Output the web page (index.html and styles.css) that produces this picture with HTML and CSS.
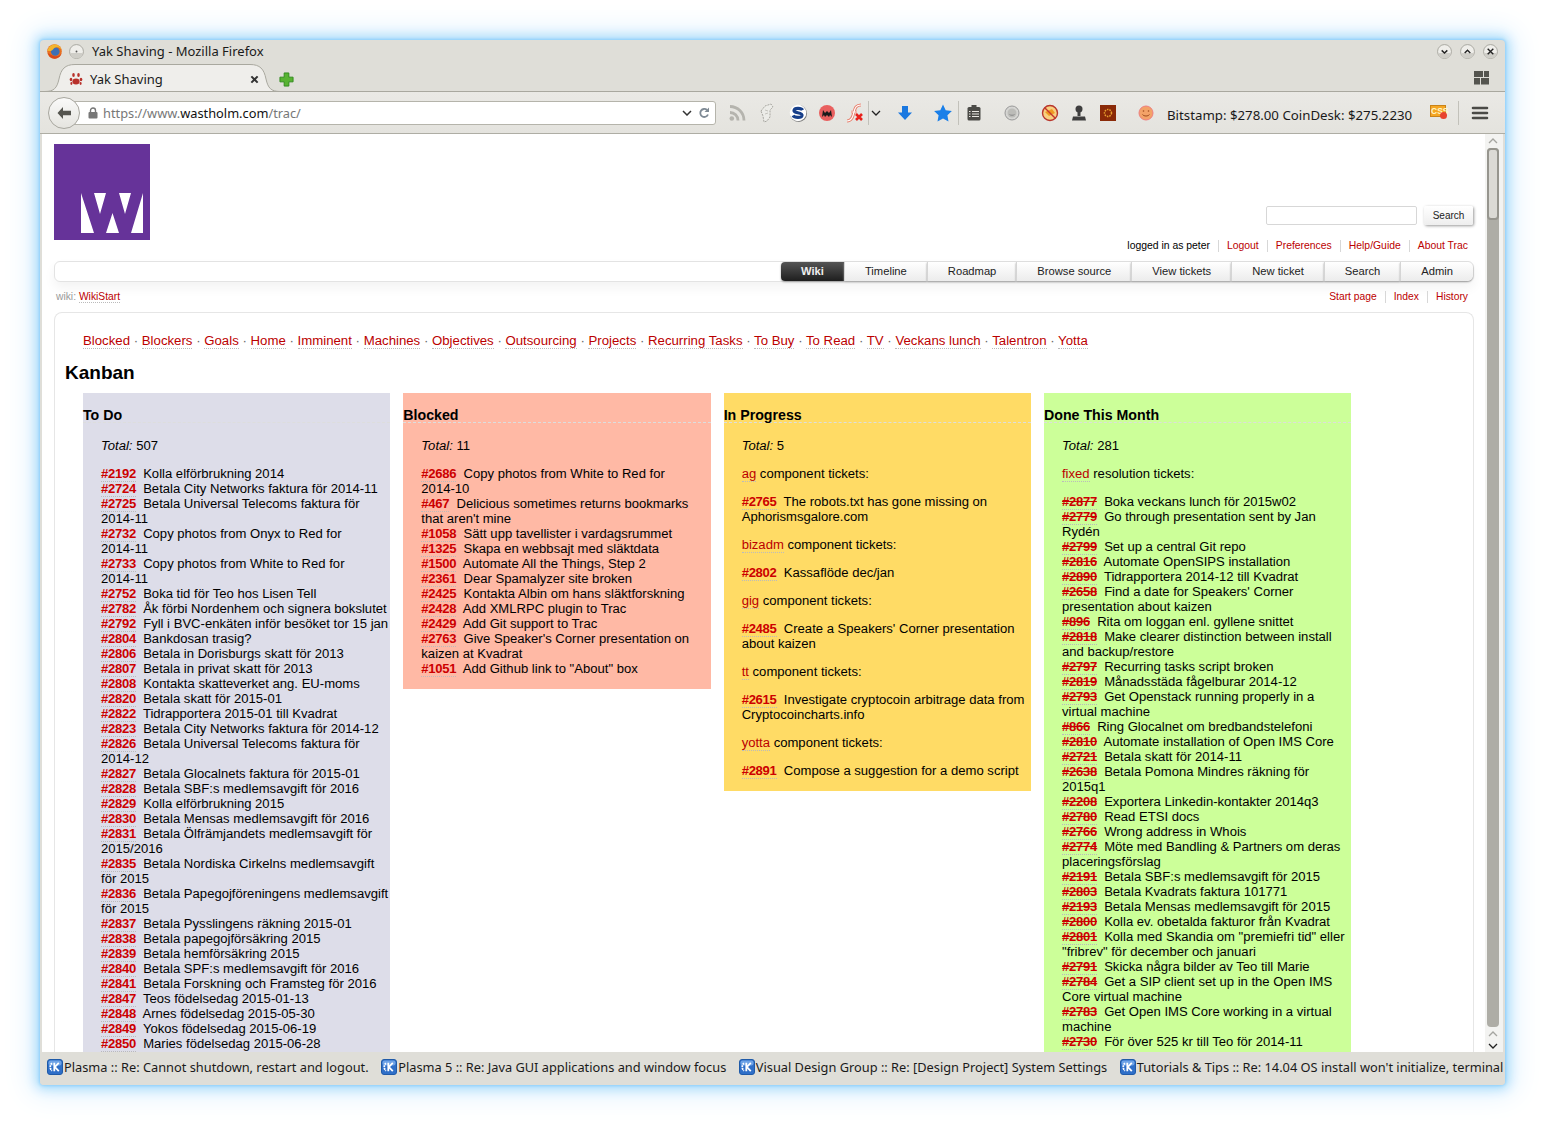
FILE: index.html
```html
<!DOCTYPE html>
<html lang="sv">
<head>
<meta charset="utf-8">
<title>Yak Shaving - Mozilla Firefox</title>
<link rel="stylesheet" href="styles.css">
</head>
<body>
<svg class="defs" aria-hidden="true">
  <symbol id="kde" viewBox="0 0 16 16">
    <rect x=".5" y=".5" width="15" height="15" rx="2.5" fill="#2f6fc8" stroke="#1f5aa8"/>
    <rect x="1.5" y="1.5" width="13" height="5" rx="2" fill="#6ea3e6"/>
    <path d="M5 4.200a5 5 0 0 0 0 7.600" fill="none" stroke="#fff" stroke-width="1.800" stroke-dasharray="1.800 .7"/>
    <path d="M7.300 3.800v8.400M11.800 3.800L7.900 8l3.900 4.200" fill="none" stroke="#fff" stroke-width="1.800"/>
  </symbol>
  <symbol id="winbtn" viewBox="0 0 16 16">
    <circle cx="8" cy="8" r="7.400" fill="#efeeea" stroke="#a5a49d"/>
    <path d="M1.300 9.500a6.800 6.800 0 0 0 13.400 0z" fill="#cfcec8"/>
  </symbol>
</svg>
<div class="window">
  <div class="titlebar">
    <svg class="ff" viewBox="0 0 16 16"><circle cx="8" cy="8" r="7.800" fill="#e8701f"/><circle cx="8.800" cy="8" r="4.600" fill="#3e6fb5"/><path d="M.6 7C1.500 3 4.500.4 8.500.4c3.200 0 5.700 2 6.800 5.200-2-2.200-4.300-2.600-6.300-2-2 .7-2 2-3.500 3C4 7.600 2.200 8 .6 7z" fill="#f4b52c"/><path d="M.8 9.500c1.200 3.800 4.300 6.200 7.700 6.100 3.300-.1 6.300-2.500 7-5.900-1.600 2.800-4.300 4-7 3.300-2.700-.6-5-1.800-7.700-3.500z" fill="#d8481c"/></svg>
    <svg class="pin" viewBox="0 0 16 16"><use href="#winbtn"/><circle cx="8" cy="8" r="1" fill="#555"/></svg>
    <span class="wintitle">Yak Shaving - Mozilla Firefox</span>
    <div class="winbtns">
      <svg class="wb" viewBox="0 0 16 16"><use href="#winbtn"/><path d="M5 6.800l3 2.800 3-2.800" fill="none" stroke="#222" stroke-width="1.500"/></svg>
      <svg class="wb" viewBox="0 0 16 16"><use href="#winbtn"/><path d="M5 9.500l3-2.800 3 2.800" fill="none" stroke="#222" stroke-width="1.500"/></svg>
      <svg class="wb" viewBox="0 0 16 16"><use href="#winbtn"/><path d="M5 5l6 6M11 5l-6 6" fill="none" stroke="#222" stroke-width="1.500"/></svg>
    </div>
  </div>
  <div class="tabstrip">
    <div class="tab">
      <svg class="tabshape" viewBox="0 0 235 28"><path d="M0 27.500C9 27.500 12 24 14 15 16 5 20 .5 30 .5H205C215 .5 219 5 221 15 223 24 226 27.500 235 27.500Z" fill="#efeeeb" stroke="#a9a89f"/></svg>
      <svg class="paw" viewBox="0 0 14 14" fill="#b8302a"><ellipse cx="7" cy="9.500" rx="3.600" ry="3"/><ellipse cx="2" cy="7.500" rx="1.300" ry="1.800"/><ellipse cx="12" cy="7.500" rx="1.300" ry="1.800"/><ellipse cx="4.500" cy="3" rx="1.300" ry="2"/><ellipse cx="9.500" cy="3" rx="1.300" ry="2"/><ellipse cx="2.400" cy="11.500" rx="1" ry="1.400"/><ellipse cx="11.600" cy="11.500" rx="1" ry="1.400"/></svg>
      <span class="tabtitle">Yak Shaving</span>
      <svg class="tabclose" viewBox="0 0 10 10"><path d="M1.500 1.500l7 7M8.500 1.500l-7 7" stroke="#333" stroke-width="2.200" fill="none"/></svg>
    </div>
    <svg class="newtab" viewBox="0 0 16 16"><path d="M5.500 1h5v4.500H15v5h-4.500V15h-5v-4.500H1v-5h4.500z" fill="#58b332" stroke="#2f8a1b"/></svg>
    <svg class="tabgroups" viewBox="0 0 16 14" fill="#55554f"><rect x="0" y="0" width="9" height="6"/><rect x="10" y="0" width="5" height="6"/><rect x="0" y="7" width="6" height="6.500"/><rect x="7" y="7" width="8" height="6.500"/></svg>
  </div>
  <div class="navbar">
    <div class="urlbar">
      <svg class="lock" viewBox="0 0 10 12"><path d="M2.500 5V3.500a2.500 2.500 0 0 1 5 0V5" fill="none" stroke="#777" stroke-width="1.400"/><rect x=".5" y="5" width="9" height="6.500" rx="1" fill="#777"/></svg>
      <span class="url">https://www.<b>wastholm.com</b>/trac/</span>
      <svg class="urlchev" viewBox="0 0 10 6"><path d="M1 1l4 4 4-4" fill="none" stroke="#333" stroke-width="1.500"/></svg>
      <svg class="reload" viewBox="0 0 12 12"><path d="M10 7.500A4 4 0 1 1 9 3" fill="none" stroke="#7f8a95" stroke-width="1.800"/><path d="M11 .5v4.500H6.500z" fill="#7f8a95"/></svg>
    </div>
    <div class="backbtn"><svg viewBox="0 0 16 14"><path d="M7 1L1.500 7 7 13V9.200h8V4.800H7z" fill="#55554f"/></svg></div>
    <svg class="ic m11" viewBox="0 0 20 20"><g fill="none" stroke="#b5b4ae" stroke-width="2.800"><path d="M3 9.500a8 8 0 0 1 8 8"/><path d="M3 3.500a14 14 0 0 1 14 14"/></g><circle cx="4.800" cy="15.500" r="2.300" fill="#b5b4ae"/></svg>
    <svg class="ic m10" viewBox="0 0 20 20"><path d="M4 8L8 3l6-2 2 3-3 3v7l-3 4-3 1-1-6z" fill="#ecece8" stroke="#a8a7a1" stroke-dasharray="2 1"/><path d="M8 7l3 1M8 11l3-1" stroke="#c4c3bd"/></svg>
    <svg class="ic m11" viewBox="0 0 20 20"><circle cx="10.500" cy="10.500" r="8.500" fill="#777"/><circle cx="10" cy="10" r="8.300" fill="#fff"/><path d="M14.500 7.200c-1-2.200-8-2.700-8.500.3C5.500 10.500 14.500 9 14 12.500 13.500 15.200 6.500 15 5 12.500" fill="none" stroke="#173f8a" stroke-width="3.200"/></svg>
    <svg class="ic m9" viewBox="0 0 20 20"><circle cx="10" cy="10" r="8" fill="#e9605f"/><path d="M5 14l1-7 2 3 2-2 2 2 2-3 1 7-2-2-1 2-2-2-2 2-1-2z" fill="#1b1b1b"/></svg>
    <svg class="ic m8" viewBox="0 0 20 20"><g fill="none" stroke="#e8826f"><path d="M2 18c5 0 6-5 7-9s2-7 7-7" stroke-width="3"/><path d="M6 9h6" stroke-width="2.400"/></g><g fill="none" stroke="#fff"><path d="M2 18c5 0 6-5 7-9s2-7 7-7" stroke-width="1.200"/><path d="M6 9h6" stroke-width=".8"/></g><path d="M11 11l6 6M17 11l-6 6" stroke="#e8201a" stroke-width="2.600"/></svg>
    <span class="sep m3"></span>
    <svg class="chev m2" viewBox="0 0 10 6"><path d="M1 1l4 4 4-4" fill="none" stroke="#222" stroke-width="1.300"/></svg>
    <svg class="ic m14" viewBox="0 0 20 20"><path d="M7 3h6v6.500h4L10 17 3 9.500h4z" fill="#1a78e0"/></svg>
    <svg class="ic m18" viewBox="0 0 20 20"><path d="M10 1.500l2.700 5.700 6.200.8-4.500 4.300 1.100 6.200L10 15.500l-5.500 3 1.100-6.200L1.100 8l6.200-.8z" fill="#1a7fe8"/></svg>
    <span class="sep m5"></span>
    <svg class="ic m5" viewBox="0 0 20 20"><rect x="3.500" y="4" width="13" height="13.500" rx="1.500" fill="#4b4b47"/><rect x="7.500" y="2" width="5" height="4" fill="#4b4b47"/><path d="M8 8.500h7M8 11h7M8 13.500h7M5 8.500h1.500M5 11h1.500M5 13.500h1.500" stroke="#e8e7e2"/></svg>
    <svg class="ic m18" viewBox="0 0 20 20"><circle cx="10" cy="10" r="7" fill="#d5d5d2" stroke="#999"/><circle cx="10" cy="10" r="4.500" fill="#bcbcb8"/><path d="M7.500 11.500c1 1 4 1 5 0" fill="none" stroke="#888"/></svg>
    <svg class="ic m18" viewBox="0 0 20 20"><circle cx="10" cy="10" r="7.500" fill="#f8d080" stroke="#b8352c" stroke-width="1.400"/><path d="M5 9l7-3 3 4-6 3z" fill="#ee9a22"/><path d="M4.700 4.700l10.600 10.600" stroke="#c4352c" stroke-width="1.400"/></svg>
    <svg class="ic m9" viewBox="0 0 20 20" fill="#3e3e3e"><circle cx="10" cy="6" r="3.500"/><rect x="8.500" y="8" width="3" height="5"/><path d="M4 13.500h12l1 4H3z"/></svg>
    <svg class="ic m9" viewBox="0 0 20 20"><rect x="2" y="2" width="16" height="16" fill="#8a2a08"/><circle cx="10" cy="10" r="3.500" fill="none" stroke="#e8a030" stroke-width="1.500" stroke-dasharray="1.500 1"/></svg>
    <svg class="ic m18" viewBox="0 0 20 20"><circle cx="10" cy="10" r="7" fill="#f3a268" stroke="#ee7f7f"/><circle cx="7.500" cy="8" r=".8" fill="#a04c20"/><circle cx="12.500" cy="8" r=".8" fill="#a04c20"/><path d="M6.500 11.500c1.500 2 5.500 2 7 0" fill="none" stroke="#a04c20"/></svg>
    <span class="prices">Bitstamp: $278.00 CoinDesk: $275.2230</span>
    <div class="cssicon m18"><span>CSS</span><i></i></div>
    <span class="sep m12"></span>
    <svg class="ic m11" viewBox="0 0 20 20"><path d="M3 5h14M3 10h14M3 15h14" stroke="#4a4a46" stroke-width="2.600" stroke-linecap="round"/></svg>
  </div>
  <div class="viewport">
    <div class="page">
      <header class="sitehead">
        <svg class="logo" viewBox="0 0 96 96"><rect width="96" height="96" fill="#663399"/><path d="M27 49l13 40H27zM40 49h12l-6 21zM52 89h13l-6.500-20zM65 49h12l-6 21zM89 49v40H77z" fill="#fff"/></svg>
        <form class="search"><input class="searchbox" type="text"><button class="searchbtn" type="button">Search</button></form>
      </header>
      <nav class="metanav">
        <span>logged in as peter</span><a>Logout</a><a>Preferences</a><a>Help/Guide</a><a>About Trac</a>
      </nav>
      <nav class="mainnav">
        <a class="active">Wiki</a><a>Timeline</a><a>Roadmap</a><a>Browse source</a><a>View tickets</a><a>New ticket</a><a>Search</a><a>Admin</a>
      </nav>
      <div class="ctxt">
        <div class="crumb">wiki: <a>WikiStart</a></div>
        <div class="ctxtnav"><a>Start page</a><a>Index</a><a>History</a></div>
      </div>
      <main class="content">
        <p class="links"><a>Blocked</a> · <a>Blockers</a> · <a>Goals</a> · <a>Home</a> · <a>Imminent</a> · <a>Machines</a> · <a>Objectives</a> · <a>Outsourcing</a> · <a>Projects</a> · <a>Recurring Tasks</a> · <a>To Buy</a> · <a>To Read</a> · <a>TV</a> · <a>Veckans lunch</a> · <a>Talentron</a> · <a>Yotta</a></p>
        <h1>Kanban</h1>
        <div class="board">
          <section class="col todo">
            <h2>To Do</h2>
            <p><em>Total:</em> 507</p>
            <p>
              <a class="t">#2192</a>&nbsp; Kolla elförbrukning 2014<br>
              <a class="t">#2724</a>&nbsp; Betala City Networks faktura för 2014-11<br>
              <a class="t">#2725</a>&nbsp; Betala Universal Telecoms faktura för <span class="nb">2014-11</span><br>
              <a class="t">#2732</a>&nbsp; Copy photos from Onyx to Red for <span class="nb">2014-11</span><br>
              <a class="t">#2733</a>&nbsp; Copy photos from White to Red for <span class="nb">2014-11</span><br>
              <a class="t">#2752</a>&nbsp; Boka tid för Teo hos Lisen Tell<br>
              <a class="t">#2782</a>&nbsp; Åk förbi Nordenhem och signera bokslutet<br>
              <a class="t">#2792</a>&nbsp; Fyll i BVC-enkäten inför besöket tor 15 jan<br>
              <a class="t">#2804</a>&nbsp; Bankdosan trasig?<br>
              <a class="t">#2806</a>&nbsp; Betala in Dorisburgs skatt för 2013<br>
              <a class="t">#2807</a>&nbsp; Betala in privat skatt för 2013<br>
              <a class="t">#2808</a>&nbsp; Kontakta skatteverket ang. EU-moms<br>
              <a class="t">#2820</a>&nbsp; Betala skatt för 2015-01<br>
              <a class="t">#2822</a>&nbsp; Tidrapportera 2015-01 till Kvadrat<br>
              <a class="t">#2823</a>&nbsp; Betala City Networks faktura för 2014-12<br>
              <a class="t">#2826</a>&nbsp; Betala Universal Telecoms faktura för <span class="nb">2014-12</span><br>
              <a class="t">#2827</a>&nbsp; Betala Glocalnets faktura för 2015-01<br>
              <a class="t">#2828</a>&nbsp; Betala SBF:s medlemsavgift för 2016<br>
              <a class="t">#2829</a>&nbsp; Kolla elförbrukning 2015<br>
              <a class="t">#2830</a>&nbsp; Betala Mensas medlemsavgift för 2016<br>
              <a class="t">#2831</a>&nbsp; Betala Ölfrämjandets medlemsavgift för 2015/2016<br>
              <a class="t">#2835</a>&nbsp; Betala Nordiska Cirkelns medlemsavgift för 2015<br>
              <a class="t">#2836</a>&nbsp; Betala Papegojföreningens medlemsavgift för 2015<br>
              <a class="t">#2837</a>&nbsp; Betala Pysslingens räkning 2015-01<br>
              <a class="t">#2838</a>&nbsp; Betala papegojförsäkring 2015<br>
              <a class="t">#2839</a>&nbsp; Betala hemförsäkring 2015<br>
              <a class="t">#2840</a>&nbsp; Betala SPF:s medlemsavgift för 2016<br>
              <a class="t">#2841</a>&nbsp; Betala Forskning och Framsteg för 2016<br>
              <a class="t">#2847</a>&nbsp; Teos födelsedag 2015-01-13<br>
              <a class="t">#2848</a>&nbsp; Arnes födelsedag 2015-05-30<br>
              <a class="t">#2849</a>&nbsp; Yokos födelsedag 2015-06-19<br>
              <a class="t">#2850</a>&nbsp; Maries födelsedag 2015-06-28
            </p>
          </section>
          <section class="col blocked">
            <h2>Blocked</h2>
            <p><em>Total:</em> 11</p>
            <p>
              <a class="t">#2686</a>&nbsp; Copy photos from White to Red for <span class="nb">2014-10</span><br>
              <a class="t">#467</a>&nbsp; Delicious sometimes returns bookmarks that aren't mine<br>
              <a class="t">#1058</a>&nbsp; Sätt upp tavellister i vardagsrummet<br>
              <a class="t">#1325</a>&nbsp; Skapa en webbsajt med släktdata<br>
              <a class="t">#1500</a>&nbsp; Automate All the Things, Step 2<br>
              <a class="t">#2361</a>&nbsp; Dear Spamalyzer site broken<br>
              <a class="t">#2425</a>&nbsp; Kontakta Albin om hans släktforskning<br>
              <a class="t">#2428</a>&nbsp; Add XMLRPC plugin to Trac<br>
              <a class="t">#2429</a>&nbsp; Add Git support to Trac<br>
              <a class="t">#2763</a>&nbsp; Give Speaker's Corner presentation on kaizen at Kvadrat<br>
              <a class="t">#1051</a>&nbsp; Add Github link to "About" box
            </p>
          </section>
          <section class="col progress">
            <h2>In Progress</h2>
            <p><em>Total:</em> 5</p>
            <p><a>ag</a> component tickets:</p>
            <p><a class="t">#2765</a>&nbsp; The robots.txt has gone missing on Aphorismsgalore.com</p>
            <p><a>bizadm</a> component tickets:</p>
            <p><a class="t">#2802</a>&nbsp; Kassaflöde dec/jan</p>
            <p><a>gig</a> component tickets:</p>
            <p><a class="t">#2485</a>&nbsp; Create a Speakers' Corner presentation about kaizen</p>
            <p><a>tt</a> component tickets:</p>
            <p><a class="t">#2615</a>&nbsp; Investigate cryptocoin arbitrage data from Cryptocoincharts.info</p>
            <p><a>yotta</a> component tickets:</p>
            <p><a class="t">#2891</a>&nbsp; Compose a suggestion for a demo script</p>
          </section>
          <section class="col done">
            <h2>Done This Month</h2>
            <p><em>Total:</em> 281</p>
            <p><a>fixed</a> resolution tickets:</p>
            <p>
              <a class="t c">#2877</a>&nbsp; Boka veckans lunch för 2015w02<br>
              <a class="t c">#2779</a>&nbsp; Go through presentation sent by Jan Rydén<br>
              <a class="t c">#2799</a>&nbsp; Set up a central Git repo<br>
              <a class="t c">#2816</a>&nbsp; Automate OpenSIPS installation<br>
              <a class="t c">#2890</a>&nbsp; Tidrapportera 2014-12 till Kvadrat<br>
              <a class="t c">#2658</a>&nbsp; Find a date for Speakers' Corner presentation about kaizen<br>
              <a class="t c">#896</a>&nbsp; Rita om loggan enl. gyllene snittet<br>
              <a class="t c">#2818</a>&nbsp; Make clearer distinction between install and backup/restore<br>
              <a class="t c">#2797</a>&nbsp; Recurring tasks script broken<br>
              <a class="t c">#2819</a>&nbsp; Månadsstäda fågelburar 2014-12<br>
              <a class="t c">#2793</a>&nbsp; Get Openstack running properly in a virtual machine<br>
              <a class="t c">#866</a>&nbsp; Ring Glocalnet om bredbandstelefoni<br>
              <a class="t c">#2810</a>&nbsp; Automate installation of Open IMS Core<br>
              <a class="t c">#2721</a>&nbsp; Betala skatt för 2014-11<br>
              <a class="t c">#2638</a>&nbsp; Betala Pomona Mindres räkning för 2015q1<br>
              <a class="t c">#2208</a>&nbsp; Exportera Linkedin-kontakter 2014q3<br>
              <a class="t c">#2780</a>&nbsp; Read ETSI docs<br>
              <a class="t c">#2766</a>&nbsp; Wrong address in Whois<br>
              <a class="t c">#2774</a>&nbsp; Möte med Bandling &amp; Partners om deras placeringsförslag<br>
              <a class="t c">#2191</a>&nbsp; Betala SBF:s medlemsavgift för 2015<br>
              <a class="t c">#2803</a>&nbsp; Betala Kvadrats faktura 101771<br>
              <a class="t c">#2193</a>&nbsp; Betala Mensas medlemsavgift för 2015<br>
              <a class="t c">#2800</a>&nbsp; Kolla ev. obetalda fakturor från Kvadrat<br>
              <a class="t c">#2801</a>&nbsp; Kolla med Skandia om "premiefri tid" eller "fribrev" för december och januari<br>
              <a class="t c">#2791</a>&nbsp; Skicka några bilder av Teo till Marie<br>
              <a class="t c">#2784</a>&nbsp; Get a SIP client set up in the Open IMS Core virtual machine<br>
              <a class="t c">#2783</a>&nbsp; Get Open IMS Core working in a virtual machine<br>
              <a class="t c">#2730</a>&nbsp; För över 525 kr till Teo för 2014-11
            </p>
          </section>
        </div>
      </main>
    </div>
    <div class="scrollbar">
      <svg class="arrow up" viewBox="0 0 10 6"><path d="M1 5l4-4 4 4" fill="none" stroke="#a5a5a0" stroke-width="1.300"/></svg>
      <div class="trough"><div class="thumb"></div></div>
      <svg class="arrow mid" viewBox="0 0 10 6"><path d="M1 5l4-4 4 4" fill="none" stroke="#a5a5a0" stroke-width="1.300"/></svg>
      <svg class="arrow" viewBox="0 0 10 6"><path d="M1 1l4 4 4-4" fill="none" stroke="#222" stroke-width="1.300"/></svg>
    </div>
  </div>
  <footer class="statusbar">
    <div class="stitem"><svg class="kde"><use href="#kde"/></svg>Plasma :: Re: Cannot shutdown, restart and logout.</div>
    <div class="stitem"><svg class="kde"><use href="#kde"/></svg>Plasma 5 :: Re: Java GUI applications and window focus</div>
    <div class="stitem"><svg class="kde"><use href="#kde"/></svg>Visual Design Group :: Re: [Design Project] System Settings</div>
    <div class="stitem"><svg class="kde"><use href="#kde"/></svg>Tutorials &amp; Tips :: Re: 14.04 OS install won't initialize, terminal</div>
  </footer>
</div>
</body>
</html>
```
FILE: styles.css
```css
* { box-sizing: border-box; }
html, body { margin: 0; padding: 0; height: 1125px; overflow: hidden; background: #fff; }
.defs { display: block; width: 0; height: 0; overflow: hidden; }
.window {
  margin: 40px;
  width: 1465px;
  height: 1045px;
  display: flex;
  flex-direction: column;
  background: #dfded8;
  border-radius: 4px;
  box-shadow: 0 0 3px 1px #8fd0fb, 0 0 12px 4px #a8dcfb, 0 0 28px 10px #e2f2fe;
  overflow: hidden;
  font-family: "Noto Sans", sans-serif;
  font-size: 13px;
  color: #1a1a1a;
}
/* title bar */
.titlebar { height: 22px; flex: none; display: flex; align-items: center; padding: 0 7px; }
.ff { width: 15px; height: 15px; margin-right: 7px; }
.pin { width: 15px; height: 15px; margin-right: 8px; }
.wintitle { line-height: 22px; }
.winbtns { margin-left: auto; display: flex; gap: 8px; }
.wb { width: 15px; height: 15px; }
/* tabs */
.tabstrip { height: 30px; flex: none; display: flex; align-items: flex-end; padding: 0 15px 0 5px; border-bottom: 1px solid #a9a89f; position: relative; }
.tab { position: relative; width: 235px; height: 28px; margin-bottom: -1px; display: flex; align-items: center; padding: 2px 21px 0 24px; }
.tabshape { position: absolute; left: 0; top: 0; width: 235px; height: 28px; }
.paw { position: relative; width: 14px; height: 14px; margin-right: 7px; }
.tabtitle { position: relative; flex: 1; }
.tabclose { position: relative; width: 9px; height: 9px; }
.newtab { width: 15px; height: 15px; margin: 0 0 4px -1px; position: relative; }
.tabgroups { width: 16px; height: 14px; margin: 0 0 6px auto; }
/* nav bar */
.navbar { height: 42px; flex: none; display: flex; align-items: center; padding-left: 20px; background: linear-gradient(#eae9e5, #e4e3de); border-bottom: 1px solid #aeada4; position: relative; }
.urlbar { width: 656px; height: 24px; display: flex; align-items: center; padding-left: 27px; background: #fff; border: 1px solid #b5b4ab; border-radius: 0 3px 3px 0; }
.backbtn { position: absolute; left: 8px; top: 5px; width: 32px; height: 32px; border-radius: 50%; background: linear-gradient(#fafaf9, #e5e4df); border: 1px solid #a8a79f; display: flex; align-items: center; justify-content: center; }
.backbtn svg { width: 16px; height: 14px; }
.lock { width: 10px; height: 12px; margin-right: 5px; }
.url { color: #777; flex: 1; font-size: 12.800px; }
.url b { font-weight: 400; color: #111; }
.urlchev { width: 10px; height: 6px; margin-right: 6px; }
.reload { width: 12px; height: 12px; margin-right: 5px; }
.ic { width: 20px; height: 20px; flex: none; }
.sep { width: 1px; height: 24px; background: #c2c1ba; flex: none; }
.chev { width: 10px; height: 6px; flex: none; }
.m2 { margin-left: 2px; } .m3 { margin-left: 3px; } .m5 { margin-left: 5px; } .m8 { margin-left: 8px; } .m9 { margin-left: 9px; }
.m10 { margin-left: 10px; } .m11 { margin-left: 11px; } .m12 { margin-left: 12px; } .m14 { margin-left: 14px; } .m18 { margin-left: 18px; }
.prices { margin-left: 11px; width: 245px; white-space: nowrap; padding-top: 5px; font-size: 13.250px; }
.cssicon { width: 16px; height: 12px; flex: none; position: relative; margin-top: -3px; background: #f5a623; border: 1px solid #c98318; font: bold 8.500px/10px "Liberation Sans", sans-serif; color: #fff6c8; text-align: center; }
.cssicon i { position: absolute; right: -2px; bottom: -3px; width: 7px; height: 7px; border-radius: 50%; background: #e8432e; }
/* viewport */
.viewport { flex: 1; min-height: 0; display: flex; padding: 0 2px; }
.page { flex: 1; min-width: 0; background: #fff; padding: 10px 11px 0 12px; overflow: hidden; font-family: "Liberation Sans", sans-serif; font-size: 13.080px; line-height: 15px; color: #000; }
.page a { color: #b00; border-bottom: 1px dotted #bbb; }
.scrollbar { width: 18px; flex: none; background: #f3f3f1; display: flex; flex-direction: column; align-items: center; padding: 4px 3px 3px 0; }
.arrow { width: 10px; height: 6px; flex: none; }
.arrow.up { margin-bottom: 4px; }
.arrow.mid { margin: 4px 0 6px; }
.trough { flex: 1; width: 12px; background: #aeada6; border-radius: 4px; }
.thumb { height: 72px; background: #dbdad5; border: 2px solid #96958e; border-radius: 4px; }
/* trac header */
.sitehead { display: flex; justify-content: space-between; align-items: flex-end; height: 96px; }
.logo { width: 96px; height: 96px; display: block; }
.search { display: flex; gap: 7px; margin: 0 1px 15px 0; }
.searchbox { width: 151px; height: 19px; border: 1px solid #d7d7d7; border-radius: 2px; background: #fff; padding: 0; }
.searchbtn { width: 49px; height: 19px; padding: 0; border: 0; border-radius: 2px; background: linear-gradient(#fff, #eee); box-shadow: 1px 1px 3px #999; font: 10px "Liberation Sans", sans-serif; color: #222; }
.metanav { height: 12px; display: flex; justify-content: flex-end; font-size: 10.400px; line-height: 12px; padding-right: 6px; }
.metanav > * { padding: 0 8px; border-left: 1px solid #d7d7d7; border-bottom: 0; }
.metanav > :first-child { border-left: 0; }
.metanav > :last-child { padding-right: 0; }
.page .metanav a, .page .ctxtnav a { border-bottom: 0; }
.mainnav { margin-top: 9px; height: 21px; display: flex; justify-content: flex-end; background: #fff; border: 1px solid #e3e3e3; border-radius: 6px; box-shadow: 0 6px 12px rgba(0,0,0,.05); font-size: 11.200px; line-height: 19px; }
.page .mainnav a { color: #222; padding: 0 20px; border: 0; border-left: 1px solid #d5d5d5; background: linear-gradient(#fff, #ececec); box-shadow: 0 1px 2px #999; }
.page .mainnav a:last-child { border-radius: 0 6px 6px 0; }
.page .mainnav a.active { background: linear-gradient(#555, #1e1e1e); color: #eee; font-weight: 700; border-radius: 4px 0 0 4px; border: 0; }
.ctxt { display: flex; justify-content: space-between; margin-top: 9px; height: 12px; font-size: 10.300px; line-height: 12px; padding: 0 6px 0 2px; }
.crumb { color: #999; }
.ctxtnav { display: flex; }
.ctxtnav a { padding: 0 8px; border-left: 1px solid #d7d7d7; }
.ctxtnav a:first-child { border-left: 0; }
.ctxtnav a:last-child { padding-right: 0; }
/* wiki content */
.content { margin-top: 9px; height: 760px; border: 1px solid #e6e6e6; border-bottom: 0; border-radius: 8px 8px 0 0; padding: 20px 10px 0 10px; }
.links { margin: 0 0 0 18px; color: #666; font-size: 13.220px; }
h1 { margin: 13px 0 9px; font-size: 19px; line-height: 23px; font-weight: 700; }
.board { display: flex; gap: 13px; align-items: flex-start; margin-left: 18px; }
.col { width: 307.330px; flex: none; }
.col h2 { margin: 14px 0 15px; height: 16px; font-size: 14.200px; line-height: 17px; font-weight: 700; border-bottom: 1px dashed #ddd; }
.col p { margin: 0 0 13px 18px; }
.nb { white-space: nowrap; }
.todo { background: #dddde9; }
.blocked { background: #ffb9a5; }
.progress { background: #ffdb65; }
.done { background: #ccff99; }
.page a.t { font-weight: 700; color: #c00; letter-spacing: -.3px; }
.page a.c { text-decoration: line-through; }
/* status bar */
.statusbar { height: 33px; flex: none; display: flex; align-items: center; gap: 12.500px; padding: 0 2px 3px 7px; white-space: nowrap; overflow: hidden; background: #dfded8; font-size: 12.800px; }
.stitem { display: flex; align-items: center; gap: 1px; flex: none; }
.kde { width: 16px; height: 16px; flex: none; }
```
